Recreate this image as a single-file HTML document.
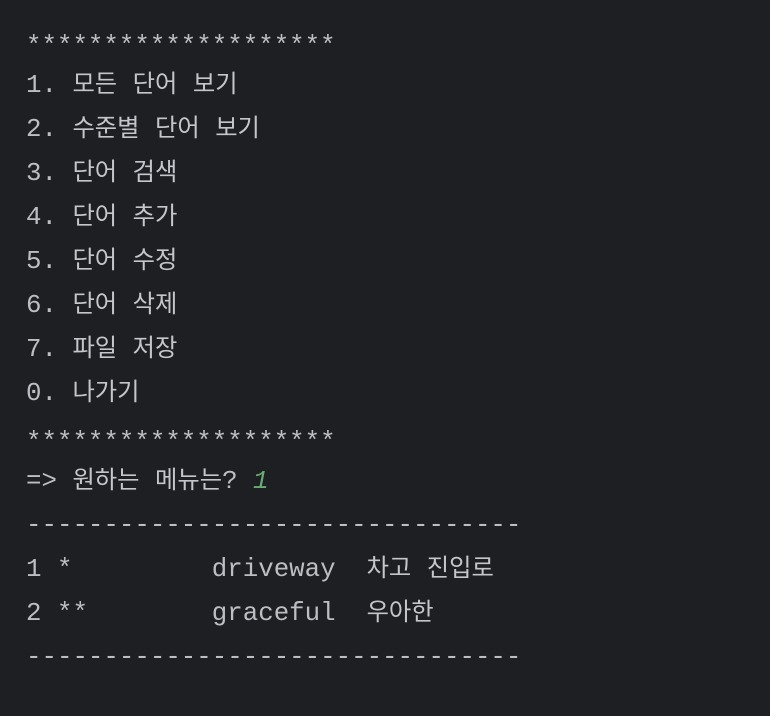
<!DOCTYPE html>
<html><head><meta charset="utf-8"><style>
html,body{margin:0;padding:0;background:#1e1f22;width:770px;height:716px;overflow:hidden}
.t{padding:20px 0 0 26px;font-family:"Liberation Mono","Noto Sans CJK KR",monospace;font-size:25.8px;color:#bcbec4}
.t div{height:44px;line-height:44px;white-space:pre}
.t div.s{position:relative;top:5px}
.g{color:#6aab73;font-style:italic}
.k{font-family:"Noto Sans CJK KR",sans-serif;font-size:24.3px;line-height:1;color:#c4c6cc}
</style></head><body><div class="t">
<div class="s">********************</div>
<div>1. <span class="k">모든</span> <span class="k">단어</span> <span class="k">보기</span></div>
<div>2. <span class="k">수준별</span> <span class="k">단어</span> <span class="k">보기</span></div>
<div>3. <span class="k">단어</span> <span class="k">검색</span></div>
<div>4. <span class="k">단어</span> <span class="k">추가</span></div>
<div>5. <span class="k">단어</span> <span class="k">수정</span></div>
<div>6. <span class="k">단어</span> <span class="k">삭제</span></div>
<div>7. <span class="k">파일</span> <span class="k">저장</span></div>
<div>0. <span class="k">나가기</span></div>
<div class="s">********************</div>
<div>=> <span class="k">원하는</span> <span class="k">메뉴는</span>? <span class="g">1</span></div>
<div>--------------------------------</div>
<div>1 *         driveway  <span class="k">차고</span> <span class="k">진입로</span></div>
<div>2 **        graceful  <span class="k">우아한</span></div>
<div>--------------------------------</div>
</div></body></html>
